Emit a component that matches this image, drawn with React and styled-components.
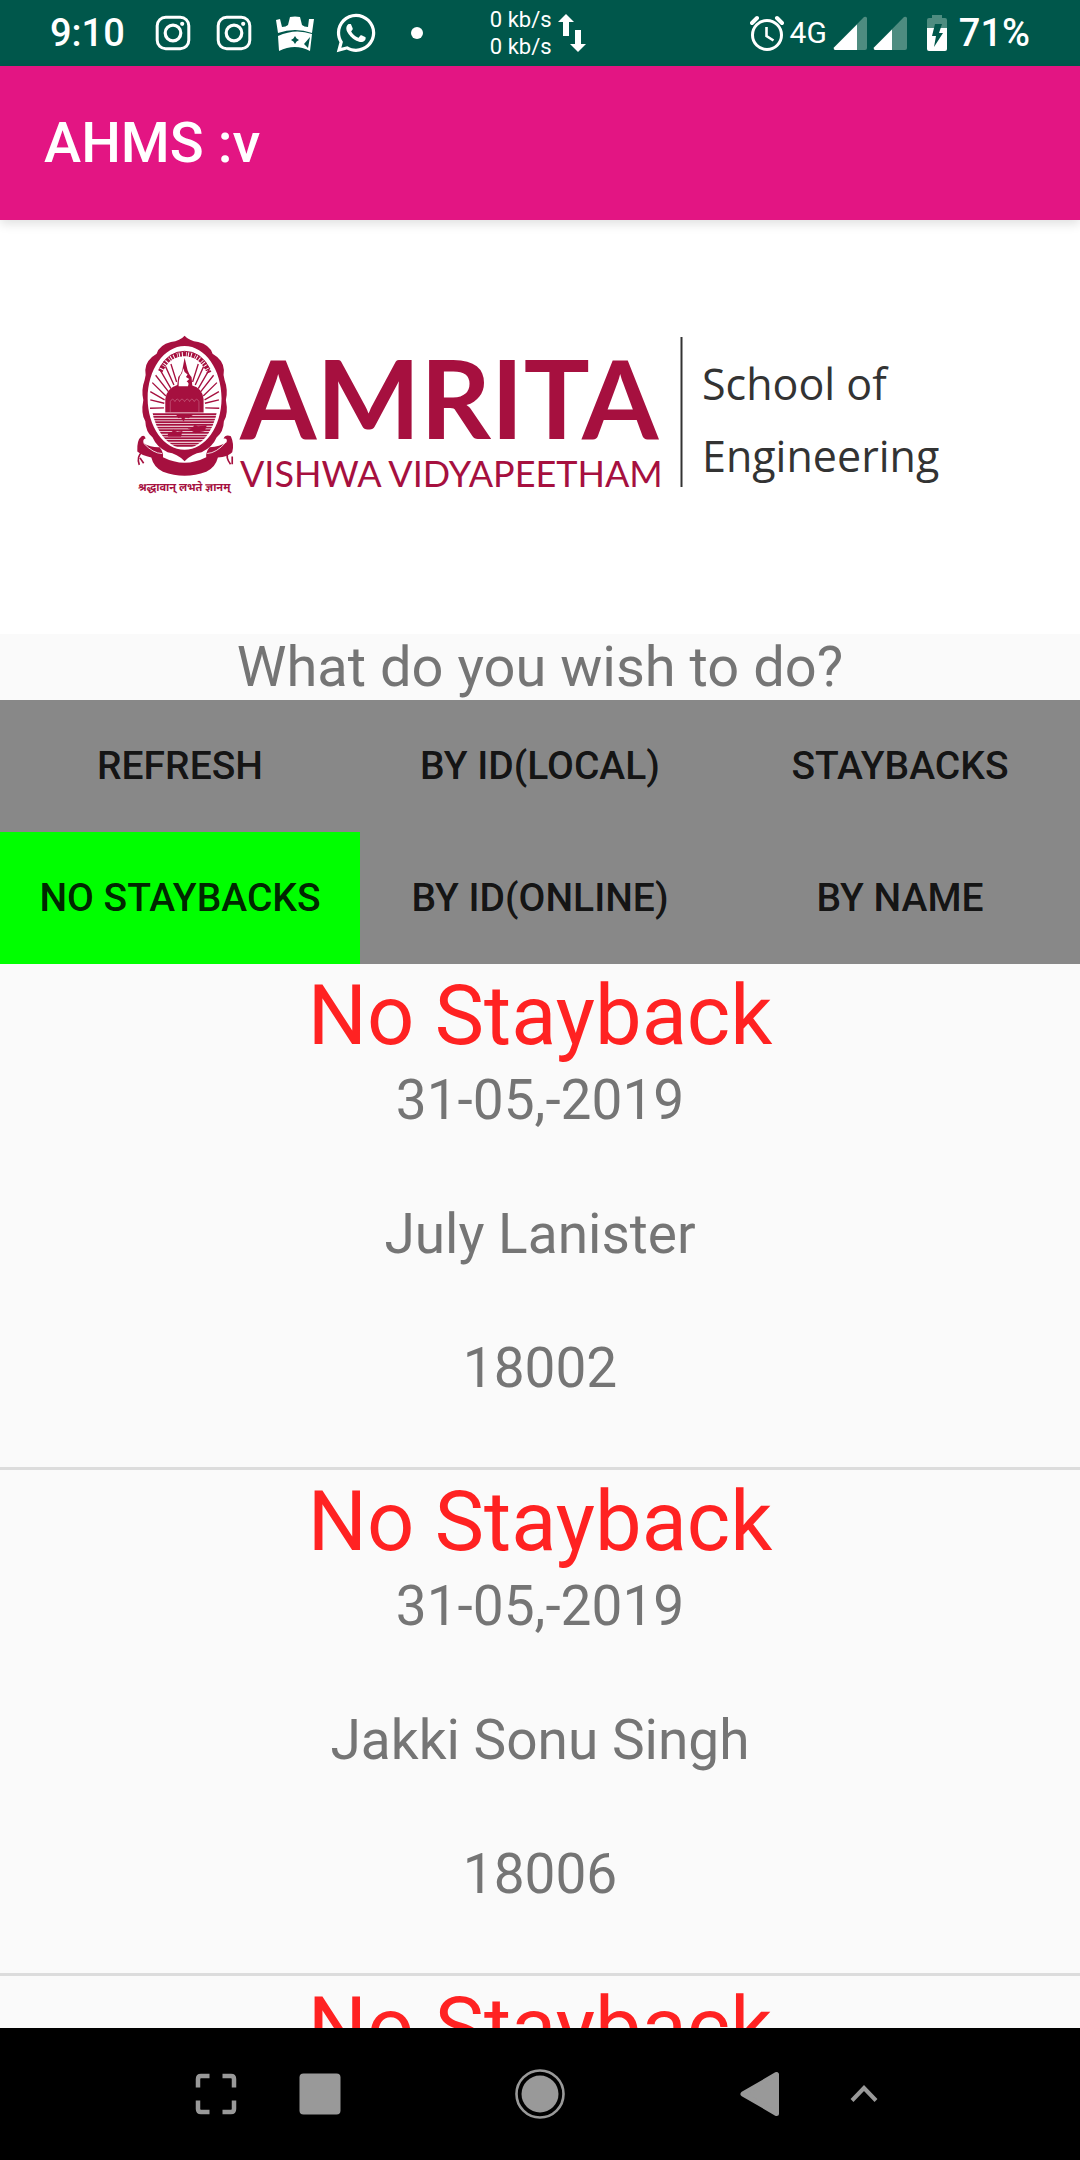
import React, { useState } from "react";
import styled, { createGlobalStyle } from "styled-components";
import { FaWhatsapp } from "react-icons/fa";

const GlobalStyle = createGlobalStyle`
  * { box-sizing: border-box; }
  body { margin: 0; background: #fafafa; font-family: Roboto, "Liberation Sans", sans-serif; }
`;

const Screen = styled.div`
  display: flex;
  flex-direction: column;
  height: 100vh;
  overflow: hidden;
  background: #fafafa;
`;

const StatusBar = styled.div`
  flex: none;
  display: flex;
  align-items: center;
  justify-content: space-between;
  height: 66px;
  padding: 0 50px;
  background: #00574b;
  color: #fff;
`;

const StatusGroup = styled.div`
  display: flex;
  align-items: center;
  gap: ${(p) => p.$gap}px;
`;

const StatusText = styled.span`
  font-size: ${(p) => (p.$small ? 30 : 38)}px;
  font-weight: ${(p) => (p.$small ? 400 : 500)};
  line-height: 40px;
`;

const Notifications = styled.div`
  display: grid;
  grid-template-columns: repeat(5, 61px);
  align-items: center;
  justify-items: center;
`;

const Speed = styled.div`
  padding-left: 24px;
  font-size: 22px;
  line-height: 27px;
  white-space: nowrap;
`;

const Icon = styled.svg`
  display: block;
  flex: none;
`;

const AppBar = styled.header`
  flex: none;
  position: relative;
  display: flex;
  align-items: center;
  height: 154px;
  padding: 0 44px;
  background: #e31583;
  color: #fff;
  box-shadow: 0 4px 10px rgba(0, 0, 0, 0.12);
`;

const AppTitle = styled.h1`
  margin: 0;
  font-size: 56px;
  line-height: 66px;
  font-weight: 500;
`;

const Banner = styled.div`
  flex: none;
  background: #fff;
  svg { display: block; width: 100%; height: auto; }
`;

const Prompt = styled.p`
  flex: none;
  margin: 0;
  font-size: 56px;
  line-height: 66px;
  text-align: center;
  color: #757575;
`;

const Actions = styled.div`
  flex: none;
  display: grid;
  grid-template-columns: repeat(3, 1fr);
`;

const ActionButton = styled.button`
  height: 132px;
  padding: 0;
  border: 0;
  background: ${(p) => (p.$active ? "#00ff00" : "#888888")};
  color: rgba(0, 0, 0, 0.87);
  font: 500 39px/48px Roboto, "Liberation Sans", sans-serif;
`;

const List = styled.ul`
  flex: 1;
  min-height: 0;
  margin: 0;
  padding: 0;
  overflow: hidden;
  list-style: none;
`;

const Item = styled.li`
  border-bottom: 3px solid #dcdcdc;
  text-align: center;
  color: #757575;
`;

const ItemTitle = styled.h2`
  margin: 0;
  padding: 4px 0 1px;
  font-size: 83px;
  line-height: 96px;
  font-weight: 400;
  color: #ff2222;
`;

const ItemLine = styled.p`
  margin: 0;
  padding-bottom: 64px;
  font-size: 55px;
  line-height: 70px;
`;

const NavBar = styled.nav`
  flex: none;
  display: grid;
  grid-template-columns: 108fr 100fr 340fr 100fr 108fr;
  height: 132px;
  padding: 0 15%;
  background: #000;
`;

const NavButton = styled.button`
  display: flex;
  align-items: center;
  justify-content: center;
  padding: 0;
  border: 0;
  background: transparent;
  color: #999;
`;

const Instagram = () => (
  <Icon width="38" height="38" viewBox="0 0 38 38" fill="none" stroke="#fff">
    <rect x="3.2" y="3.2" width="31.6" height="31.6" rx="8.5" strokeWidth="3" />
    <circle cx="19" cy="19" r="7.8" strokeWidth="3.2" />
    <circle cx="28.2" cy="9.8" r="2.1" fill="#fff" stroke="none" />
  </Icon>
);

const Outlaw = () => (
  <Icon width="38" height="38" viewBox="0 0 38 38" fill="#fff">
    <path d="M0 6l4-1 2 8q4 0 6-2l2-8q5-1 10 0l2 8q2 2 6 2l1-8 5 0-2 14Q19 13 2 19z" />
    <path fillRule="evenodd" d="M2 22q17-8 34-2l-2 17q-15-8-31 0zM19 22l-1.600 2.400L15 26l2.400 1.600L19 30l1.600-2.400L23 26l-2.400-1.600zM34 23l-6 7 4 4z" />
  </Icon>
);

const Updown = () => (
  <Icon width="28" height="40" viewBox="0 0 28 40" fill="#fff">
    <path d="M8 1l8 8h-5v14H5V9H0zM20 39l8-8h-5V17h-6v14h-5z" />
  </Icon>
);

const Alarm = () => (
  <Icon width="34" height="38" viewBox="0 0 34 38" fill="none" stroke="#fff">
    <circle cx="17" cy="21" r="14.500" strokeWidth="3" />
    <path d="M16.500 13v9l7 4.500" strokeWidth="2.600" />
    <path d="M2 9l5-5M32 9l-5-5" strokeWidth="4" strokeLinecap="round" />
  </Icon>
);

const Signal = ({ level }) => (
  <Icon width="34" height="34" viewBox="0 0 34 34">
    <path d="M1.500 34Q0 33 1 31.500L31 1q2-1 3 1v30q0 2-2 2z" fill="#4e8c80" />
    <path d={`M2 34Q0 33 1 31.500L${level} ${32.5 - level}V34z`} fill="#fff" />
  </Icon>
);

const Battery = () => (
  <Icon width="20" height="36" viewBox="0 0 20 36">
    <path d="M5 0h10v3h3q2 0 2 2v9H0V5q0-2 2-2h3z" fill="#4e8c80" />
    <path d="M0 13h20v21q0 2-2 2H2q-2 0-2-2z" fill="#fff" />
    <path d="M8 9h7l-3 9h4L7 32l2-11H5z" fill="#00574b" />
  </Icon>
);

const RAYS = [
  [90, 265, 132, 264], [91, 240, 133, 250], [91, 215, 134, 240], [97, 188, 138, 228],
  [107, 166, 146, 216], [120, 149, 153, 206], [137, 140, 162, 195], [153, 132, 170, 186],
];
const WATER = [283, 291, 299, 307, 315, 323, 331, 339, 347, 355, 363, 371, 378];

const Crest = () => (
  <g transform="translate(120 100) scale(0.333)" fill="#a6103f">
    <path
      fillRule="evenodd"
      d="M194 47Q207 62 235 66Q270 75 278 101Q311 120 312 150Q309 164 314 180Q325 210 318 240Q326 282 312 304Q311 336 290 353Q278 382 245 397Q216 401 194 424Q172 401 143 397Q110 382 98 353Q77 336 76 304Q62 282 70 240Q63 210 74 180Q79 164 76 150Q77 120 110 101Q118 75 153 66Q181 62 194 47ZM194 78C132 78 83 150 83 235S132 390 194 390 305 320 305 235 256 78 194 78Z"
    />
    {RAYS.map(([x1, y1, x2, y2]) => (
      <path
        key={`${x1}-${y1}`}
        d={`M${x1} ${y1}L${x2} ${y2}M${388 - x1} ${y1}L${388 - x2} ${y2}`}
        stroke="#a6103f"
        strokeWidth="4"
      />
    ))}
    <path d="M121 154Q145 102 194 102T268 158" fill="none" stroke="#a6103f" strokeWidth="14" strokeDasharray="6 3 9 2 4 3" />
    <path d="M119 145Q145 94 194 94T270 147" fill="none" stroke="#a6103f" strokeWidth="3" />
    <path d="M194 113l9 38q3 10 12 21l2 25q30 8 34 40v41H136v-41q4-32 36-42l3-24q10-10 12-20z" />
    <path d="M190 145q-2 15-10 25-5 14-4 29h28q5-10-4-14l8-8-10-6 5-7-9-8z" fill="#fff" />
    <path d="M151 276v-31q7-14 14 0 7-15 14 0 7-15 15 0 8-15 15 0 7-15 14 0 7-14 14 0v31" fill="none" stroke="#fff" strokeWidth="2" opacity="0.35" />
    <clipPath id="lake"><ellipse cx="194" cy="235" rx="101" ry="150" /></clipPath>
    <g clipPath="url(#lake)" stroke="#a6103f">
      {WATER.map((y) => <path key={y} d={`M88 ${y}H300`} strokeWidth="5.500" />)}
      <path d="M145 350q-4-15 10-12l5-8 12 6 15-3-4 17zM204 325q14 3 20-10l10 4 26-2-6 16-28 6z" />
      <path d="M170 285h48l-12 9-10-2-5 12-8-12-8 2z" />
    </g>
    <path d="M52 395Q50 360 65 349Q75 345 77 356Q67 358 71 370Q92 383 119 382Q131 397 129 412Q194 445 259 412Q257 397 269 382Q300 381 320 367Q324 354 311 356Q316 343 333 349Q344 374 337 397Q323 412 294 413Q287 442 259 456Q194 480 129 456Q101 442 94 413Q65 407 52 395Z" />
    <path d="M66 397Q49 411 58 435M60 414l11 16M325 397Q316 412 332 433M337 410v23" fill="none" stroke="#a6103f" strokeWidth="5" />
    <path d="M71 370Q100 401 126 401M317 368Q290 399 262 401" fill="none" stroke="#fff" strokeWidth="2.500" />
  </g>
);

const Logo = () => (
  <svg viewBox="0 0 1080 414" role="img" aria-label="Amrita Vishwa Vidyapeetham School of Engineering">
    <Crest />
    <g fill="#a6103f">
      <text x="138" y="271" fontSize="11" fontWeight="700" fontFamily='"Noto Sans Devanagari", "Noto Sans", sans-serif'>श्रद्धावान् लभते ज्ञानम्</text>
      <text x="240" y="219" fontSize="110" fontWeight="700" fontFamily="Lato, sans-serif">AMRITA</text>
      <text x="240" y="267" fontSize="36" fontFamily="Lato, sans-serif">VISHWA VIDYAPEETHAM</text>
    </g>
    <path d="M681.500 117V267" stroke="#333" strokeWidth="2" />
    <g fill="#333" fontFamily='"Open Sans", sans-serif' fontSize="43">
      <text x="702" y="180">School of</text>
      <text x="702" y="252">Engineering</text>
    </g>
  </svg>
);

const ACTIONS = ["REFRESH", "BY ID(LOCAL)", "STAYBACKS", "NO STAYBACKS", "BY ID(ONLINE)", "BY NAME"];
const ENTRIES = [
  { title: "No Stayback", lines: ["31-05,-2019", "July Lanister", "18002"] },
  { title: "No Stayback", lines: ["31-05,-2019", "Jakki Sonu Singh", "18006"] },
  { title: "No Stayback", lines: [] },
];

export default function App() {
  const [active, setActive] = useState("NO STAYBACKS");
  return (
    <Screen>
      <GlobalStyle />
      <StatusBar>
        <StatusGroup $gap={18}>
          <StatusText>9:10</StatusText>
          <Notifications>
            <Instagram />
            <Instagram />
            <Outlaw />
            <FaWhatsapp size={44} />
            <Icon width="12" height="12" viewBox="0 0 12 12"><circle cx="6" cy="6" r="6" fill="#fff" /></Icon>
          </Notifications>
          <StatusGroup $gap={6}>
            <Speed>0 kb/s<br />0 kb/s</Speed>
            <Updown />
          </StatusGroup>
        </StatusGroup>
        <StatusGroup $gap={20}>
          <StatusGroup $gap={6}>
            <Alarm />
            <StatusText $small>4G</StatusText>
            <Signal level={24} />
            <Signal level={19} />
          </StatusGroup>
          <StatusGroup $gap={12}>
            <Battery />
            <StatusText>71%</StatusText>
          </StatusGroup>
        </StatusGroup>
      </StatusBar>
      <AppBar><AppTitle>AHMS :v</AppTitle></AppBar>
      <Banner><Logo /></Banner>
      <Prompt>What do you wish to do?</Prompt>
      <Actions>
        {ACTIONS.map((name) => (
          <ActionButton key={name} $active={name === active} onClick={() => setActive(name)}>{name}</ActionButton>
        ))}
      </Actions>
      <List>
        {ENTRIES.map((entry, i) => (
          <Item key={i}>
            <ItemTitle>{entry.title}</ItemTitle>
            {entry.lines.map((line) => <ItemLine key={line}>{line}</ItemLine>)}
          </Item>
        ))}
      </List>
      <NavBar>
        <NavButton aria-label="Full screen">
          <Icon width="42" height="42" viewBox="0 0 42 42" fill="none" stroke="currentColor" strokeWidth="4.500">
            <path d="M14.500 3H6Q3 3 3 6v8.500M27.500 3H36q3 0 3 3v8.500M3 27.500V36q0 3 3 3h8.500M39 27.500V36q0 3-3 3h-8.500" />
          </Icon>
        </NavButton>
        <NavButton aria-label="Recent apps">
          <Icon width="42" height="42" viewBox="0 0 42 42" fill="currentColor"><rect x="0.500" y="0.500" width="41" height="41" rx="4" /></Icon>
        </NavButton>
        <NavButton aria-label="Home">
          <Icon width="50" height="50" viewBox="0 0 50 50" fill="currentColor">
            <circle cx="25" cy="25" r="18.500" />
            <circle cx="25" cy="25" r="23.500" fill="none" stroke="currentColor" strokeWidth="2.600" />
          </Icon>
        </NavButton>
        <NavButton aria-label="Back">
          <Icon width="40" height="46" viewBox="0 0 40 46" fill="currentColor" stroke="currentColor" strokeWidth="5" strokeLinejoin="round">
            <path d="M3 23L36.500 3.500v39z" />
          </Icon>
        </NavButton>
        <NavButton aria-label="Expand">
          <Icon width="28" height="18" viewBox="0 0 28 18" fill="none" stroke="currentColor" strokeWidth="4"><path d="M2 15.500L14 3l12 12.500" /></Icon>
        </NavButton>
      </NavBar>
    </Screen>
  );
}
